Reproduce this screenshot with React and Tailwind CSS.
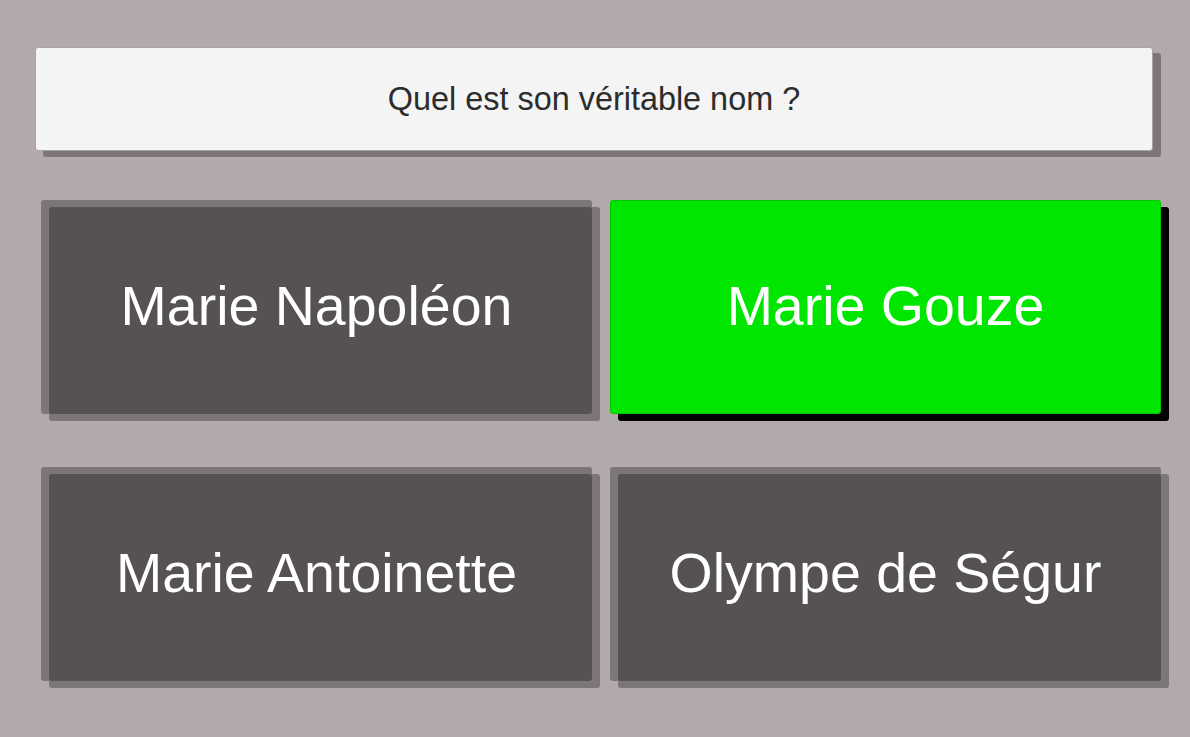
import React from 'react';

const answers = [
  { label: 'Marie Napoléon', correct: false },
  { label: 'Marie Gouze', correct: true },
  { label: 'Marie Antoinette', correct: false },
  { label: 'Olympe de Ségur', correct: false },
];

const AnswerButton = ({ label, correct }) => {
  if (correct) {
    return (
      <button className="h-[214px] w-full rounded-[3px] border border-[#00c800] bg-[#00e600] text-white shadow-[8px_7px_0_#000] flex items-center justify-center">
        <span className="text-[55.5px] leading-none">{label}</span>
      </button>
    );
  }

  return (
    <button className="h-[214px] w-full rounded-[3px] bg-black/30 pl-2 pt-[7px] shadow-[8px_7px_0_rgba(0,0,0,0.3)]">
      <div className="h-full w-full rounded-[3px] bg-black/30 pr-2 pb-[7px] flex items-center justify-center text-white">
        <span className="text-[55.5px] leading-none">{label}</span>
      </div>
    </button>
  );
};

const App = () => {
  return (
    <div
      className="w-[1190px] h-[737px] overflow-hidden bg-[#b2aaaa] pt-[47px]"
      style={{ fontFamily: '"Liberation Sans", Arial, sans-serif' }}
    >
      <div className="ml-[35px] w-[1118px] h-[104px] rounded-[3px] border border-[#a9a4a4] bg-[#f4f4f4] shadow-[8px_6px_0_rgba(0,0,0,0.3)] flex items-center justify-center">
        <span className="text-[32.4px] text-[#2c2c2c] leading-none">Quel est son véritable nom ?</span>
      </div>

      <div className="ml-[41px] mt-[49px] w-[1120px] grid grid-cols-2 gap-x-[18px] gap-y-[53px]">
        {answers.map((a) => (
          <AnswerButton key={a.label} label={a.label} correct={a.correct} />
        ))}
      </div>
    </div>
  );
};

export default App;
